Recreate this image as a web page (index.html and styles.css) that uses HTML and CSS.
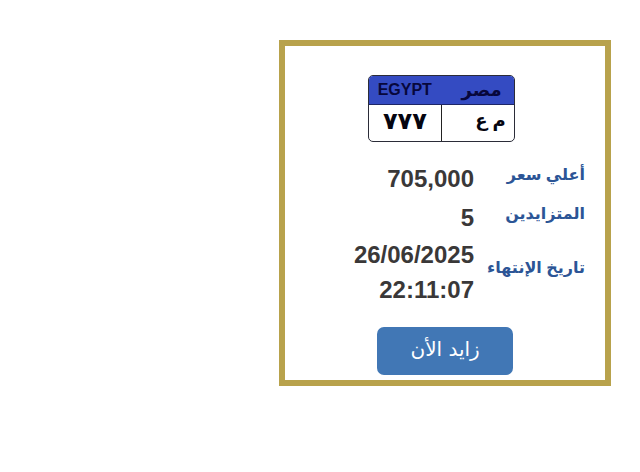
FILE: index.html
```html
<!DOCTYPE html>
<html lang="ar" dir="rtl">
<head>
<meta charset="utf-8">
<title>مزاد اللوحات</title>
<link rel="stylesheet" href="styles.css">
</head>
<body>
<main class="page">
  <article class="card">
    <div class="plate">
      <div class="plate-head">
        <span class="plate-country">مصر</span>
        <span class="plate-latin" lang="en">EGYPT</span>
      </div>
      <div class="plate-body">
        <span class="plate-letters">م ع</span>
        <span class="plate-digits">٧٧٧</span>
      </div>
    </div>
    <table class="details">
      <tr><th scope="row">أعلي سعر</th><td>705,000</td></tr>
      <tr><th scope="row">المتزايدين</th><td>5</td></tr>
      <tr><th scope="row">تاريخ الإنتهاء</th><td><bdi>26/06/2025</bdi><br><bdi>22:11:07</bdi></td></tr>
    </table>
    <button class="bid" type="button">زايد الأن</button>
  </article>
</main>
</body>
</html>
```
FILE: styles.css
```css
* {
  box-sizing: border-box;
}

body {
  margin: 0;
  background: #fff;
  font-family: "Liberation Sans", "DejaVu Sans", sans-serif;
}

.page {
  padding: 40px 29px;
}

.card {
  display: flex;
  flex-direction: column;
  align-items: center;
  width: 57%;
  min-width: 320px;
  padding: 29px 20px 5px;
  border: 6px solid #b8a24c;
}

.plate {
  width: 147px;
  margin-right: 8px;
  border: 1px solid #2b2c38;
  border-radius: 5px;
  overflow: hidden;
  color: #050510;
}

.plate-head {
  display: flex;
  align-items: center;
  justify-content: space-between;
  height: 29px;
  padding: 0 12px 0 9px;
  background: #344bc2;
  border-bottom: 1px solid #1d2667;
  color: #07073c;
  font-weight: bold;
}

.plate-country {
  font-size: 18px;
  line-height: 24px;
}

.plate-latin {
  font-size: 16px;
  line-height: 28px;
}

.plate-body {
  display: grid;
  grid-template-columns: 1fr 1fr;
  height: 36px;
  line-height: 32px;
}

.plate-letters {
  padding-right: 8px;
  border-left: 1px solid #222;
  font-size: 18px;
  font-weight: bold;
}

.plate-digits {
  text-align: center;
  font-size: 24px;
  font-weight: bold;
}

.details {
  width: 100%;
  margin-top: 17px;
  border-collapse: collapse;
}

.details th,
.details td {
  padding: 0;
  vertical-align: middle;
}

.details th {
  width: 111px;
  padding-bottom: 8px;
  color: #2c5596;
  font-size: 16px;
  line-height: 24px;
  text-align: right;
  white-space: nowrap;
}

.details td {
  height: 39px;
  color: #3a3838;
  font-size: 24px;
  font-weight: bold;
  line-height: 35px;
  text-align: right;
}

.bid {
  width: 136px;
  height: 48px;
  margin-top: 20px;
  padding: 0 0 4px;
  border: 0;
  border-radius: 7px;
  background: #4177b5;
  color: #fff;
  font-family: "DejaVu Sans", sans-serif;
  font-size: 20px;
}
```
